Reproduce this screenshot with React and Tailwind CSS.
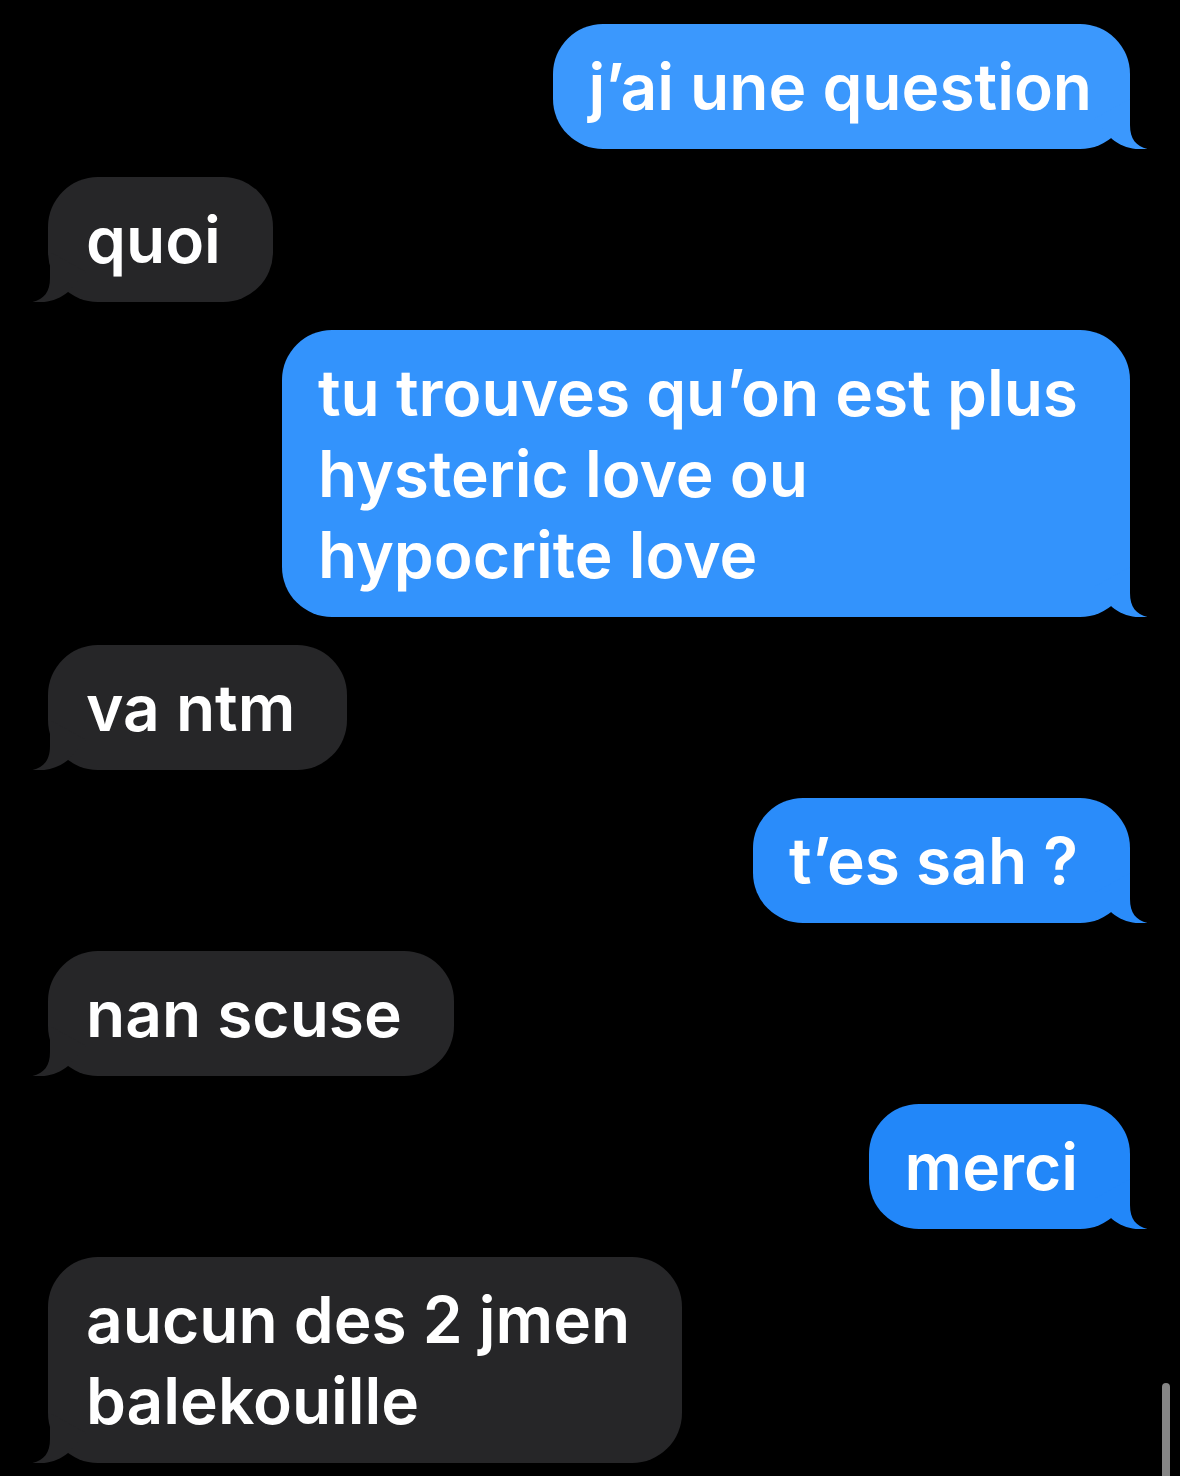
import React from "react";

function Tail({ color, side }) {
  const pos = side === "right" ? "right-[-18px]" : "left-[-16px] -scale-x-100";
  return (
    <svg
      className={`absolute bottom-0 ${pos}`}
      width="64"
      height="50"
      viewBox="0 0 64 50"
    >
      <path
        d="M46 0 L46 26 C46 40 52 47 63.5 50 C52 51.5 38 48.5 28 40 L10 20 Z"
        fill={color}
      />
    </svg>
  );
}

function Bubble({ side, color, pad, children }) {
  const row = side === "right" ? "justify-end pr-[50px]" : "justify-start pl-[48px]";
  const padding = pad || (side === "right" ? "pl-[36px] pr-[52px]" : "pl-[38px] pr-[52px]");
  return (
    <div className={`flex ${row}`}>
      <div
        className={`relative rounded-[50px] ${padding} py-[22px] text-white text-[64px] leading-[81px] font-semibold tracking-[0px] whitespace-nowrap`}
        style={{ backgroundColor: color }}
      >
        <span className="relative z-10">{children}</span>
        <Tail color={color} side={side} />
      </div>
    </div>
  );
}

export default function App() {
  const gray = "#262628";
  return (
    <div
      className="relative w-[1180px] h-[1476px] bg-black overflow-hidden"
      style={{ fontFamily: "Inter, 'Noto Sans', sans-serif" }}
    >
      <div className="flex flex-col gap-[28px] pt-[24px]">
        <Bubble side="right" color="#3b98fd" pad="pl-[36px] pr-[38px]">j’ai une question</Bubble>
        <Bubble side="left" color={gray}>quoi</Bubble>
        <Bubble side="right" color="#3393fc">
          tu trouves qu’on est plus
          <br />
          hysteric love ou
          <br />
          hypocrite love
        </Bubble>
        <Bubble side="left" color={gray}>va ntm</Bubble>
        <Bubble side="right" color="#2a8cfa">t’es sah ?</Bubble>
        <Bubble side="left" color={gray}>nan scuse</Bubble>
        <Bubble side="right" color="#2287f9">merci</Bubble>
        <Bubble side="left" color={gray}>
          aucun des 2 jmen
          <br />
          balekouille
        </Bubble>
      </div>
      <div className="absolute left-[1162px] top-[1383px] w-[8px] h-[100px] rounded-full bg-[#858585]" />
    </div>
  );
}
